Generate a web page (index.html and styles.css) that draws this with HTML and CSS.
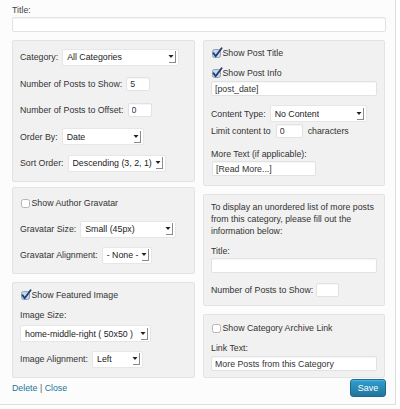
FILE: index.html
```html
<!DOCTYPE html>
<html>
<head>
<meta charset="utf-8">
<link rel="stylesheet" href="styles.css">
</head>
<body>
<div class="widget">
  <label class="lbl title-lbl">Title:</label>
  <input class="txt title-in" type="text" value="">

  <div class="cols">
    <div class="col">
      <div class="panel pl1">
        <div class="row r26"><span>Category:</span><div class="sel w117"><span>All Categories</span><svg class="arr" width="10" height="16" viewBox="0 0 10 16"><path d="M1.5 6 H6.5 L4 9 Z" fill="#222"/><path d="M8.5 2 V13.5 M2 13.5 H9" stroke="#8a8a8a" stroke-width="1" fill="none"/></svg></div></div>
        <div class="row r26"><span>Number of Posts to Show:</span><input class="txt num" type="text" value="5"></div>
        <div class="row r26"><span>Number of Posts to Offset:</span><input class="txt num" type="text" value="0"></div>
        <div class="row r26"><span>Order By:</span><div class="sel w82"><span>Date</span><svg class="arr" width="10" height="16" viewBox="0 0 10 16"><path d="M1.5 6 H6.5 L4 9 Z" fill="#222"/><path d="M8.5 2 V13.5 M2 13.5 H9" stroke="#8a8a8a" stroke-width="1" fill="none"/></svg></div></div>
        <div class="row r26"><span>Sort Order:</span><div class="sel w98"><span>Descending (3, 2, 1)</span><svg class="arr" width="10" height="16" viewBox="0 0 10 16"><path d="M1.5 6 H6.5 L4 9 Z" fill="#222"/><path d="M8.5 2 V13.5 M2 13.5 H9" stroke="#8a8a8a" stroke-width="1" fill="none"/></svg></div></div>
      </div>

      <div class="panel pl2">
        <div class="row r26 chk"><svg class="cb" width="12" height="12" viewBox="0 0 12 12"><rect x="1.5" y="2.5" width="8" height="8" rx="2" fill="#fff" stroke="#b5b5b5"/></svg><span>Show Author Gravatar</span></div>
        <div class="row r26"><span>Gravatar Size:</span><div class="sel w96"><span>Small (45px)</span><svg class="arr" width="10" height="16" viewBox="0 0 10 16"><path d="M1.5 6 H6.5 L4 9 Z" fill="#222"/><path d="M8.5 2 V13.5 M2 13.5 H9" stroke="#8a8a8a" stroke-width="1" fill="none"/></svg></div></div>
        <div class="row r26"><span>Gravatar Alignment:</span><div class="sel w50"><span>- None -</span><svg class="arr" width="10" height="16" viewBox="0 0 10 16"><path d="M1.5 6 H6.5 L4 9 Z" fill="#222"/><path d="M8.5 2 V13.5 M2 13.5 H9" stroke="#8a8a8a" stroke-width="1" fill="none"/></svg></div></div>
      </div>

      <div class="panel pl3">
        <div class="row chk h20"><svg class="cb" width="12" height="12" viewBox="0 0 12 12"><rect x="1.5" y="2.5" width="8" height="8" rx="2" fill="#c9d6e6" stroke="#8da2be"/><path d="M2.6 6.3 L4.6 9.2 L10.6 1.2" stroke="#1d3b73" stroke-width="1.8" fill="none" stroke-linecap="round" stroke-linejoin="round"/></svg><span>Show Featured Image</span></div>
        <div class="lbl is-lbl">Image Size:</div>
        <div class="sel w131 is-sel"><span>home-middle-right ( 50x50 )</span><svg class="arr" width="10" height="16" viewBox="0 0 10 16"><path d="M1.5 6 H6.5 L4 9 Z" fill="#222"/><path d="M8.5 2 V13.5 M2 13.5 H9" stroke="#8a8a8a" stroke-width="1" fill="none"/></svg></div>
        <div class="row r26 ia-row"><span>Image Alignment:</span><div class="sel w51"><span>Left</span><svg class="arr" width="10" height="16" viewBox="0 0 10 16"><path d="M1.5 6 H6.5 L4 9 Z" fill="#222"/><path d="M8.5 2 V13.5 M2 13.5 H9" stroke="#8a8a8a" stroke-width="1" fill="none"/></svg></div></div>
      </div>
    </div>

    <div class="col">
      <div class="panel pr1">
        <div class="row chk h16 mt4"><svg class="cb" width="12" height="12" viewBox="0 0 12 12"><rect x="1.5" y="2.5" width="8" height="8" rx="2" fill="#c9d6e6" stroke="#8da2be"/><path d="M2.6 6.3 L4.6 9.2 L10.6 1.2" stroke="#1d3b73" stroke-width="1.8" fill="none" stroke-linecap="round" stroke-linejoin="round"/></svg><span>Show Post Title</span></div>
        <div class="row chk h16 mt4"><svg class="cb" width="12" height="12" viewBox="0 0 12 12"><rect x="1.5" y="2.5" width="8" height="8" rx="2" fill="#c9d6e6" stroke="#8da2be"/><path d="M2.6 6.3 L4.6 9.2 L10.6 1.2" stroke="#1d3b73" stroke-width="1.8" fill="none" stroke-linecap="round" stroke-linejoin="round"/></svg><span>Show Post Info</span></div>
        <input class="txt full" type="text" value="[post_date]">
        <div class="row ct-row"><span>Content Type:</span><div class="sel w97"><span>No Content</span><svg class="arr" width="10" height="16" viewBox="0 0 10 16"><path d="M1.5 6 H6.5 L4 9 Z" fill="#222"/><path d="M8.5 2 V13.5 M2 13.5 H9" stroke="#8a8a8a" stroke-width="1" fill="none"/></svg></div></div>
        <div class="row lim-row"><span>Limit content to</span><input class="txt num27" type="text" value="0"><span>characters</span></div>
        <div class="lbl mt-lbl">More Text (if applicable):</div>
        <input class="txt rm-in" type="text" value="[Read More...]">
      </div>

      <div class="panel pr2">
        <p class="info">To display an unordered list of more posts<br>from this category, please fill out the<br>information below:</p>
        <div class="lbl t2-lbl">Title:</div>
        <input class="txt full" type="text" value="">
        <div class="row np-row"><span>Number of Posts to Show:</span><input class="txt num23" type="text" value=""></div>
      </div>

      <div class="panel pr3">
        <div class="row chk h16 mt5"><svg class="cb" width="12" height="12" viewBox="0 0 12 12"><rect x="1.5" y="2.5" width="8" height="8" rx="2" fill="#fff" stroke="#b5b5b5"/></svg><span>Show Category Archive Link</span></div>
        <div class="lbl lt-lbl">Link Text:</div>
        <input class="txt full lt-in" type="text" value="More Posts from this Category">
      </div>
    </div>
  </div>

  <div class="footer">
    <div class="links"><a href="#">Delete</a> <span class="sep">|</span> <a href="#">Close</a></div>
    <button class="save" type="button">Save</button>
  </div>
</div>
</body>
</html>
```

FILE: styles.css
```css
* { box-sizing: border-box; }
html, body { margin: 0; padding: 0; background: #ffffff; }
body {
  font-family: "Liberation Sans", Arial, Helvetica, sans-serif;
  font-size: 8.8px;
  color: #333333;
}
.widget {
  width: 396px;
  padding: 4px 9px 7px 12px;
  background: #fcfcfc;
  border-right: 1px solid #dedede;
  border-bottom: 1px solid #dedede;
}
.lbl { display: block; line-height: 12px; height: 12px; }
.title-lbl { color: #444; }
.txt {
  display: block;
  font-family: "Liberation Sans", Arial, Helvetica, sans-serif;
  font-size: 8.8px;
  color: #333;
  background: #fff;
  border: 1px solid #e2e2e2;
  border-radius: 2px;
  box-shadow: inset 0 1px 1px rgba(0,0,0,0.04);
  padding: 0 3px;
  height: 15px;
  margin: 0;
  outline: none;
}
.title-in { width: 374px; margin-top: 1px; height: 15px; }
.full { width: 100%; }
.cols {
  display: flex;
  gap: 8px;
  margin-top: 8px;
  width: 373px;
  align-items: flex-start;
}
.col { display: flex; flex-direction: column; }
.col:first-child { width: 183px; }
.col:last-child { width: 182px; }
.panel {
  background: #f1f1f1;
  border: 1px solid #e3e3e3;
  border-radius: 2px;
  padding: 0 7px;
}
.row { display: flex; align-items: center; gap: 4px; white-space: nowrap; }
.r26 { height: 26.5px; }
.chk { gap: 0; }
.cb { flex: none; margin-left: -0.5px; }
.h20 { height: 20px; }
.h16 { height: 16px; }
.mt4 { margin-top: 4px; }
.mt5 { margin-top: 5px; }

.sel {
  display: flex;
  align-items: center;
  justify-content: space-between;
  height: 17px;
  background: #fff;
  border: 1px solid #e6e6e6;
  border-radius: 2px;
  padding: 0 1px 0 4px;
  color: #222;
  flex: none;
}
.sel span { white-space: nowrap; overflow: hidden; }
.arr { flex: none; }
.w117 { width: 117px; }
.w82 { width: 82px; }
.w98 { width: 98px; }
.w96 { width: 96px; }
.w50 { width: 50px; }
.w131 { width: 131px; }
.w51 { width: 51px; }
.w97 { width: 97px; }
.num { width: 24px; height: 14px; }
.num27 { width: 27px; height: 14px; }
.num23 { width: 23px; height: 14px; }

.pl1 { padding-top: 3px; padding-bottom: 4.5px; }
.pl2 { margin-top: 5px; padding-top: 2px; padding-bottom: 5px; }
.pl2 .r26 { height: 26px; }
.pl3 { margin-top: 8px; padding-top: 2px; padding-bottom: 5px; }
.is-lbl { margin-top: 3px; height: 14px; line-height: 14px; }
.is-sel { margin-top: 3px; }
.ia-row { margin-top: 4px; height: 26px; }

.pr1 { padding-bottom: 9px; }
.ct-row { margin-top: 9px; height: 17px; }
.lim-row { margin-top: 1px; height: 15px; gap: 5px; }
.mt-lbl { margin-top: 10px; }
.rm-in { width: 104px; margin-top: 1px; margin-left: 1px; }

.pr2 { margin-top: 8px; padding-top: 6px; padding-bottom: 8px; }
.info { margin: 0; line-height: 12px; white-space: nowrap; }
.t2-lbl { margin-top: 8px; }
.pr2 .full { margin-top: 1px; }
.np-row { margin-top: 9px; height: 15px; gap: 3px; }

.pr3 { margin-top: 8px; padding-bottom: 6px; }
.lt-lbl { margin-top: 6px; }
.lt-in { margin-top: 2px; }

.footer {
  display: flex;
  align-items: center;
  justify-content: space-between;
  width: 374px;
  margin-top: 1px;
  height: 18px;
}
.links { color: #555; }
.links a { color: #21759b; text-decoration: none; }
.sep { color: #555; }
.save {
  height: 18px;
  width: 36px;
  padding: 0;
  font-family: "Liberation Sans", Arial, Helvetica, sans-serif;
  font-size: 9px;
  color: #fff;
  background: linear-gradient(to bottom, #2e9fd2, #21759b);
  border: 1px solid #1e6a8d;
  border-radius: 3px;
  box-shadow: inset 0 1px 0 rgba(120,200,230,0.5);
}
```
